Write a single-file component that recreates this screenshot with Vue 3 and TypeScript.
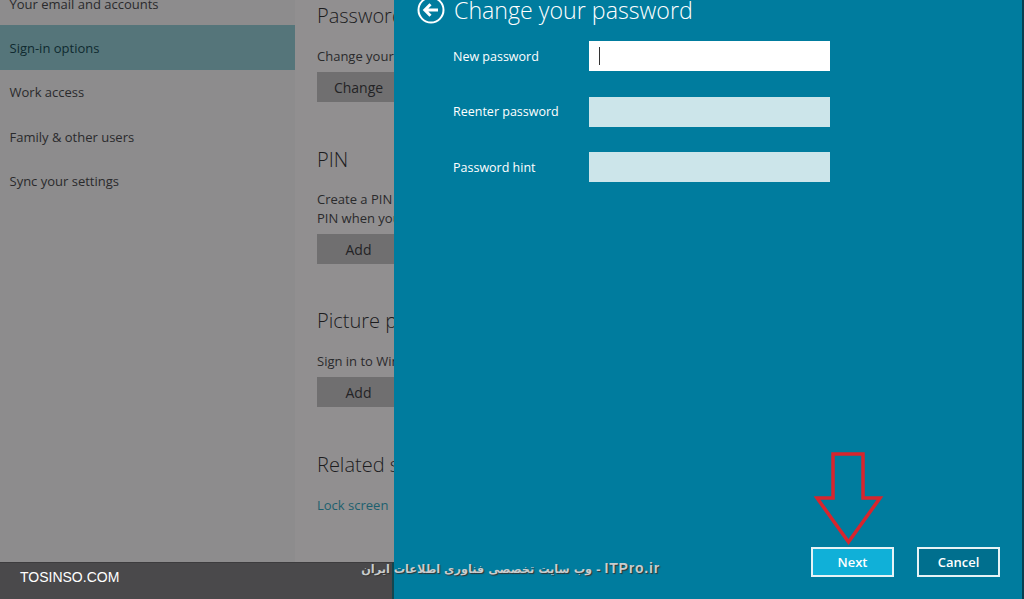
<script setup lang="ts">
const navItems = [
  { label: 'Your email and accounts', active: false },
  { label: 'Sign-in options', active: true },
  { label: 'Work access', active: false },
  { label: 'Family & other users', active: false },
  { label: 'Sync your settings', active: false },
]

const fields = [
  { label: 'New password', focused: true },
  { label: 'Reenter password', focused: false },
  { label: 'Password hint', focused: false },
]
</script>

<template>
  <div class="screen">
    <div class="backdrop">
      <div class="settings">
        <nav class="nav">
          <div v-for="item in navItems" :key="item.label" class="nav-item" :class="{ active: item.active }">
            {{ item.label }}
          </div>
        </nav>
        <main class="content">
          <section class="group first">
            <h2>Password</h2>
            <p>Change your account password</p>
            <button class="btn">Change</button>
          </section>
          <section class="group pin">
            <h2>PIN</h2>
            <p>Create a PIN to use in place of passwords. You'll be asked for this<br />PIN when you sign in to Windows, apps and services.</p>
            <button class="btn">Add</button>
          </section>
          <section class="group picture">
            <h2>Picture password</h2>
            <p>Sign in to Windows using a favorite photo</p>
            <button class="btn">Add</button>
          </section>
          <section class="group related">
            <h2>Related settings</h2>
            <a class="link">Lock screen</a>
          </section>
        </main>
      </div>
      <div class="taskbar">
        <span class="brand">TOSINSO.COM</span>
      </div>
    </div>

    <aside class="flyout">
      <header class="flyout-head">
        <svg class="back" width="28" height="28" viewBox="0 0 28 28" fill="none" stroke="#fff">
          <circle cx="14" cy="14" r="12.5" stroke-width="2" />
          <path d="M21 14H8M13.5 8.2 7.8 14l5.7 5.8" stroke-width="3" />
        </svg>
        <h1>Change your password</h1>
      </header>
      <div class="form">
        <div v-for="field in fields" :key="field.label" class="field">
          <label>{{ field.label }}</label>
          <div class="input" :class="{ focused: field.focused }">
            <span v-if="field.focused" class="caret"></span>
          </div>
        </div>
      </div>
      <footer class="actions">
        <button class="action next">Next</button>
        <button class="action">Cancel</button>
      </footer>
    </aside>

    <div class="watermark" dir="rtl"><span class="wm-latin">ITPro.ir</span> - وب سایت تخصصی فناوری اطلاعات ایران</div>

    <svg class="arrow" width="70" height="94" viewBox="0 0 70 94" fill="none">
      <path d="M19 2H49V46H66L34.500 90 3 46H19Z" stroke="#d8252d" stroke-width="3.500" />
    </svg>
  </div>
</template>

<style>
html,
body {
  margin: 0;
  background: #8e8d8e;
}
</style>

<style scoped>
.screen {
  position: relative;
  display: flex;
  width: 1024px;
  height: 599px;
  overflow: hidden;
  font-family: "Open Sans", "Noto Sans", sans-serif;
}

.backdrop {
  display: flex;
  flex-direction: column;
  width: 394px;
  flex-shrink: 0;
}

.settings {
  display: flex;
  flex: 1;
  min-height: 0;
  overflow: hidden;
}

.nav {
  width: 295px;
  flex-shrink: 0;
  margin-top: -19px;
  background: #8d8c8d;
}

.nav-item {
  display: flex;
  align-items: center;
  height: 44.3px;
  padding: 1px 0 0 9.500px;
  box-sizing: border-box;
  font-size: 13px;
  color: #2a2a2c;
  white-space: nowrap;
}

.nav-item.active {
  background: #55757a;
  color: #0f2a30;
}

.content {
  flex: 1;
  min-width: 0;
  padding-left: 22px;
  background: #918f90;
  color: #2a2a2c;
  white-space: nowrap;
  overflow: hidden;
}

.group h2 {
  margin: 0;
  font-size: 20px;
  font-weight: 300;
  line-height: 28px;
  color: #1c1c1e;
}

.group p {
  margin: 0;
  font-size: 13px;
  line-height: 19px;
}

.group.first {
  padding-top: 2px;
}

.group.first p {
  margin-top: 17px;
}

.group.pin {
  margin-top: 44px;
}

.group.pin p {
  margin-top: 16px;
}

.group.picture {
  margin-top: 43px;
}

.group.picture p {
  margin-top: 17px;
}

.group.related {
  margin-top: 44px;
}

.btn {
  display: block;
  width: 83px;
  height: 30px;
  margin-top: 6px;
  padding: 0;
  border: 0;
  background: #706f70;
  color: #232325;
  font: inherit;
  font-size: 14px;
}

.link {
  display: block;
  margin-top: 17px;
  font-size: 13px;
  line-height: 18px;
  color: #1d5f6e;
}

.taskbar {
  display: flex;
  align-items: flex-start;
  height: 37px;
  flex-shrink: 0;
  padding: 5px 0 0 20px;
  box-sizing: border-box;
  background: #4a494b;
  border-top: 1px solid #3d3c3e;
  border-right: 2px solid #12464f;
}

.brand {
  font-family: "Liberation Sans", sans-serif;
  font-size: 14px;
  line-height: 18px;
  color: #fff;
}

.flyout {
  display: flex;
  flex-direction: column;
  flex: 1;
  min-width: 0;
  box-sizing: border-box;
  padding: 0 22px 22px 59px;
  background: #007c9e;
  border-right: 2px solid #063f50;
  color: #fff;
}

.flyout-head {
  display: flex;
  align-items: center;
  gap: 9px;
  height: 20px;
  margin-left: -36px;
}

.back {
  flex-shrink: 0;
}

.flyout-head h1 {
  margin: 0;
  font-size: 23.200px;
  font-weight: 300;
  line-height: 20px;
  white-space: nowrap;
}

.form {
  display: flex;
  flex-direction: column;
  gap: 25.500px;
  margin-top: 21px;
  flex: 1;
}

.field {
  display: flex;
  align-items: center;
  height: 30px;
}

.field label {
  width: 136px;
  flex-shrink: 0;
  font-size: 12.500px;
}

.input {
  display: flex;
  align-items: center;
  width: 241px;
  height: 30px;
  background: #cce5ea;
}

.input.focused {
  background: #fff;
}

.caret {
  width: 1px;
  height: 18px;
  margin-left: 10px;
  background: #333;
}

.actions {
  display: flex;
  justify-content: flex-end;
  gap: 23px;
}

.action {
  width: 83px;
  height: 30px;
  padding: 0;
  box-sizing: border-box;
  border: 2px solid #e6f3f6;
  background: #006f8e;
  color: #fff;
  font: inherit;
  font-size: 13px;
  font-weight: 600;
}

.action.next {
  background: #10b0d8;
}

.watermark {
  position: absolute;
  left: 360px;
  top: 558px;
  width: 300px;
  font-family: "DejaVu Sans", sans-serif;
  font-size: 11.300px;
  font-weight: 700;
  line-height: 20px;
  white-space: nowrap;
  color: #c9cccd;
  text-shadow: 1px 1px 1px #333;
}

.wm-latin {
  font-family: "Liberation Sans", sans-serif;
  font-size: 14px;
  letter-spacing: 0.8px;
}

.arrow {
  position: absolute;
  left: 814px;
  top: 452px;
}
</style>
